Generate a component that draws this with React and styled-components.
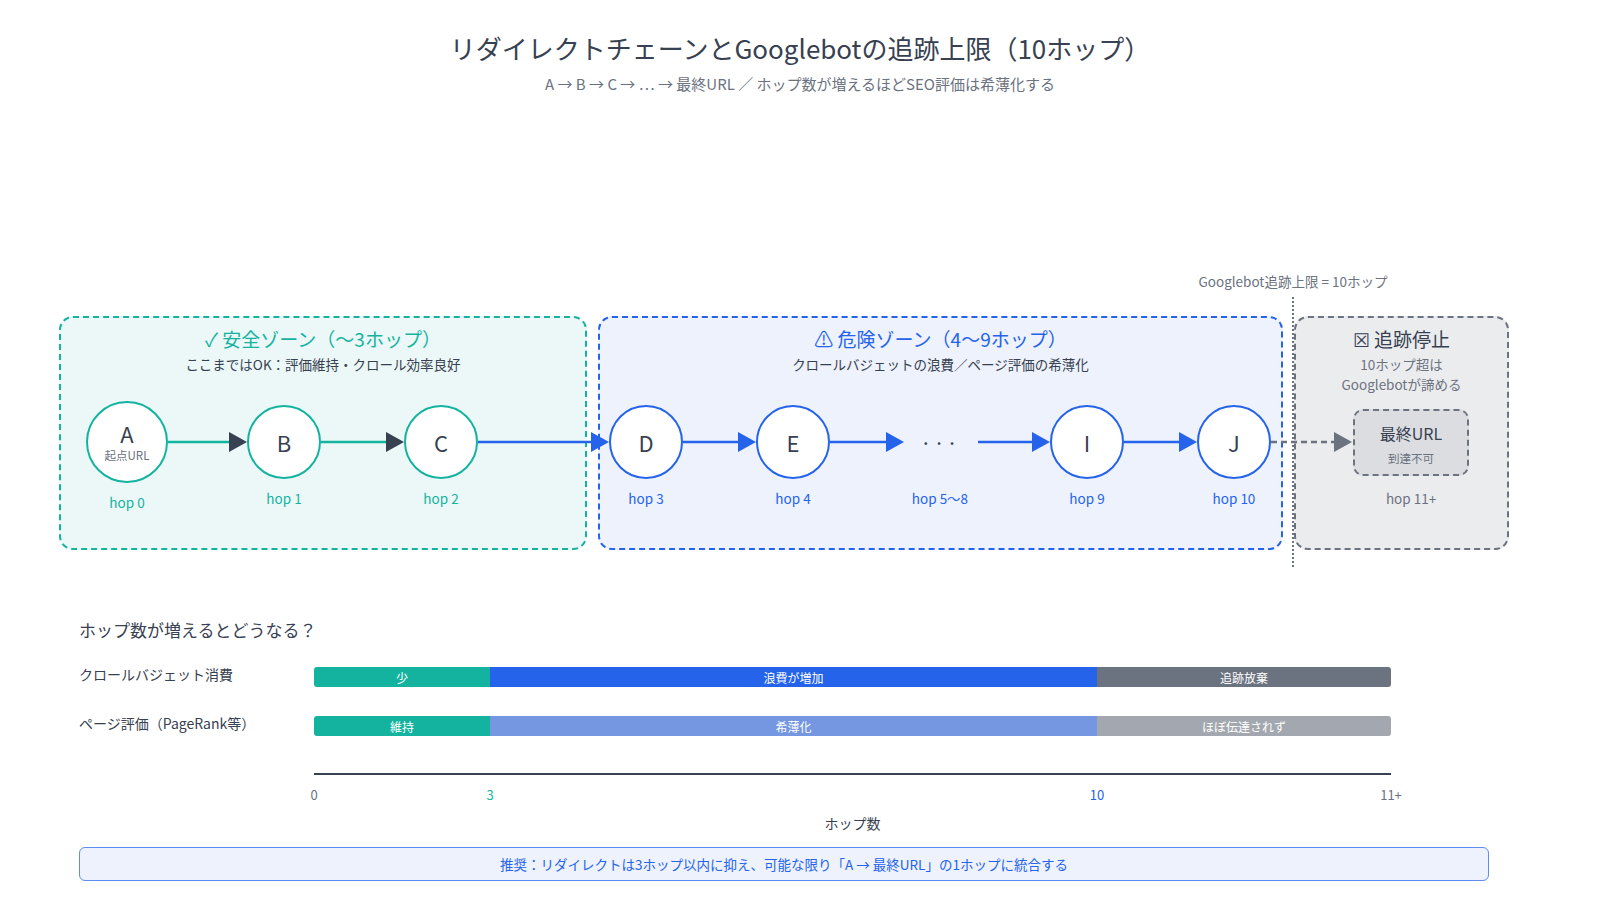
import React from "react";
import styled, { createGlobalStyle } from "styled-components";

const teal = "#14b3a0";
const blue = "#2563eb";
const gray = "#6b7280";
const dark = "#374151";

const Global = createGlobalStyle`
  html, body {
    margin: 0;
    width: 1600px;
    height: 900px;
    overflow: hidden;
  }
  body {
    background: #fff;
    font-family: "Noto Sans CJK JP", "Inter", sans-serif;
    color: ${dark};
  }
`;

const Page = styled.div`
  width: 1600px;
  height: 900px;
  display: flex;
  flex-direction: column;
  overflow: hidden;
`;

const Header = styled.header`
  display: flex;
  flex-direction: column;
  align-items: center;
  padding-top: 30px;
  gap: 8px;
`;

const Title = styled.h1`
  margin: 0;
  font-size: 26px;
  font-weight: 400;
  color: ${dark};
  line-height: 36px;
`;

const Subtitle = styled.div`
  font-size: 15px;
  color: ${gray};
  line-height: 20px;
`;

const Diagram = styled.section`
  position: relative;
  margin-top: 168px;
  height: 310px;
  flex-shrink: 0;
`;

const LimitLabel = styled.div`
  position: absolute;
  left: 1293px;
  top: 9px;
  transform: translateX(-50%);
  font-size: 13.5px;
  color: ${gray};
  white-space: nowrap;
`;

const LimitLine = styled.div`
  position: absolute;
  left: 1292px;
  top: 35px;
  height: 270px;
  border-left: 2px dotted ${gray};
`;

const Zones = styled.div`
  display: flex;
  gap: 11px;
  padding: 54px 0 0 59px;
`;

const Zone = styled.div`
  width: ${(p) => p.$w}px;
  height: 234px;
  flex-shrink: 0;
  box-sizing: border-box;
  border: 2px dashed ${(p) => p.$c};
  background: ${(p) => p.$bg};
  border-radius: 14px;
  display: flex;
  flex-direction: column;
  align-items: center;
  padding-top: 8px;
`;

const ZoneTitle = styled.div`
  font-size: 19px;
  color: ${(p) => p.$c};
  line-height: 26px;
`;

const ZoneSub = styled.div`
  font-size: 13.5px;
  color: ${(p) => p.$c || dark};
  line-height: 20px;
  text-align: center;
  margin-top: 2px;
`;

const Arrows = styled.svg`
  position: absolute;
  left: 0;
  top: 0;
  width: 1600px;
  height: 310px;
  pointer-events: none;
`;

const Node = styled.div`
  position: absolute;
  left: ${(p) => p.$x - p.$r}px;
  top: ${(p) => 180 - p.$r}px;
  width: ${(p) => p.$r * 2}px;
  height: ${(p) => p.$r * 2}px;
  box-sizing: border-box;
  border-radius: 50%;
  border: 2.5px solid ${(p) => p.$c};
  background: #fff;
  display: flex;
  flex-direction: column;
  align-items: center;
  justify-content: center;
  font-size: 22px;
  color: ${dark};
  line-height: 1;
`;

const NodeSub = styled.span`
  font-size: 11.5px;
  line-height: 14px;
  color: ${gray};
  margin-top: 4px;
`;

const Dots = styled.div`
  position: absolute;
  left: 910px;
  top: 166px;
  width: 60px;
  text-align: center;
  font-size: 20px;
  letter-spacing: 2px;
  color: ${dark};
`;

const HopLabel = styled.div`
  position: absolute;
  left: ${(p) => p.$x - 50}px;
  top: ${(p) => p.$y}px;
  width: 100px;
  text-align: center;
  font-size: 13.5px;
  color: ${(p) => p.$c};
`;

const FinalBox = styled.div`
  position: absolute;
  left: 1353px;
  top: 147px;
  width: 116px;
  height: 67px;
  box-sizing: border-box;
  border: 2px dashed ${gray};
  background: #dcdde0;
  border-radius: 10px;
  display: flex;
  flex-direction: column;
  align-items: center;
  justify-content: center;
  gap: 2px;
  font-size: 16px;
  color: ${dark};
`;

const Impact = styled.section`
  margin-top: 46px;
  padding: 0 0 0 79px;
  display: flex;
  flex-direction: column;
`;

const ImpactTitle = styled.div`
  font-size: 17px;
  color: ${dark};
  line-height: 24px;
`;

const Rows = styled.div`
  display: grid;
  grid-template-columns: 235px 1077px;
  row-gap: 29px;
  margin-top: 25px;
  align-items: center;
`;

const RowLabel = styled.div`
  font-size: 14px;
  color: ${dark};
  margin-top: -6px;
`;

const Bar = styled.div`
  display: flex;
  height: 20px;
`;

const Seg = styled.div`
  display: flex;
  align-items: center;
  justify-content: center;
  font-size: 12px;
  color: #fff;
  background: ${(p) => p.$c};
  border-radius: ${(p) => p.$rad};
`;

const Axis = styled.div`
  margin: 37px 0 0 235px;
  width: 1077px;
  border-top: 2px solid ${dark};
  position: relative;
  height: 40px;
`;

const Tick = styled.span`
  position: absolute;
  top: 10px;
  transform: translateX(-50%);
  font-size: 13px;
  color: ${(p) => p.$c || gray};
`;

const AxisTitle = styled.div`
  width: 1077px;
  margin-left: 235px;
  text-align: center;
  font-size: 14px;
  color: ${dark};
  margin-top: -2px;
`;

const Advice = styled.div`
  margin-top: 14px;
  width: 1410px;
  height: 34px;
  box-sizing: border-box;
  border: 1.5px solid #5b8cf0;
  background: #edf2fc;
  border-radius: 6px;
  display: flex;
  align-items: center;
  justify-content: center;
  font-size: 13.5px;
  color: ${blue};
`;

const nodes = [
  { id: "A", x: 127, r: 41, c: teal, sub: "起点URL", hop: "hop 0", hy: 230 },
  { id: "B", x: 284, r: 37, c: teal, hop: "hop 1" },
  { id: "C", x: 441, r: 37, c: teal, hop: "hop 2" },
  { id: "D", x: 646, r: 37, c: blue, hop: "hop 3" },
  { id: "E", x: 793, r: 37, c: blue, hop: "hop 4" },
  { id: "I", x: 1087, r: 37, c: blue, hop: "hop 9" },
  { id: "J", x: 1234, r: 37, c: blue, hop: "hop 10" },
];

const links = [
  { x1: 168, x2: 247, line: teal, head: dark },
  { x1: 321, x2: 404, line: teal, head: dark },
  { x1: 478, x2: 609, line: blue, head: blue },
  { x1: 683, x2: 756, line: blue, head: blue },
  { x1: 830, x2: 904, line: blue, head: blue },
  { x1: 978, x2: 1050, line: blue, head: blue },
  { x1: 1124, x2: 1197, line: blue, head: blue },
  { x1: 1271, x2: 1352, line: gray, head: gray, dash: true },
];

const scale = (v) => (v <= 3 ? (v / 3) * 176 : v <= 10 ? 176 + ((v - 3) / 7) * 607 : 1077);

const rows = [
  {
    label: "クロールバジェット消費",
    segs: [
      ["少", teal, 0, 3],
      ["浪費が増加", blue, 3, 10],
      ["追跡放棄", gray, 10, 11],
    ],
  },
  {
    label: "ページ評価（PageRank等）",
    segs: [
      ["維持", teal, 0, 3],
      ["希薄化", "#7597e2", 3, 10],
      ["ほぼ伝達されず", "#a3a8b0", 10, 11],
    ],
  },
];

const App = () => (
  <Page>
    <Global />
    <Header>
      <Title>リダイレクトチェーンとGooglebotの追跡上限（10ホップ）</Title>
      <Subtitle>A → B → C → … → 最終URL ／ ホップ数が増えるほどSEO評価は希薄化する</Subtitle>
    </Header>

    <Diagram>
      <LimitLabel>Googlebot追跡上限 = 10ホップ</LimitLabel>
      <Zones>
        <Zone $w={528} $c={teal} $bg="#ebf8f7">
          <ZoneTitle $c={teal}>✓ 安全ゾーン（〜3ホップ）</ZoneTitle>
          <ZoneSub>ここまではOK：評価維持・クロール効率良好</ZoneSub>
        </Zone>
        <Zone $w={685} $c={blue} $bg="#edf2fc">
          <ZoneTitle $c={blue}>⚠ 危険ゾーン（4〜9ホップ）</ZoneTitle>
          <ZoneSub>クロールバジェットの浪費／ページ評価の希薄化</ZoneSub>
        </Zone>
        <Zone $w={215} $c={gray} $bg="#ebecee">
          <ZoneTitle $c={dark}>☒ 追跡停止</ZoneTitle>
          <ZoneSub $c={gray}>
            10ホップ超は
            <br />
            Googlebotが諦める
          </ZoneSub>
        </Zone>
      </Zones>
      <LimitLine />
      <Arrows viewBox="0 0 1600 310">
        {links.map((l, i) => (
          <g key={i}>
            <line
              x1={l.x1}
              y1={180}
              x2={l.x2 - 16}
              y2={180}
              stroke={l.line}
              strokeWidth="2.5"
              strokeDasharray={l.dash ? "6 4" : undefined}
            />
            <polygon points={`${l.x2 - 18},170 ${l.x2},180 ${l.x2 - 18},190`} fill={l.head} />
          </g>
        ))}
      </Arrows>
      {nodes.map((n) => (
        <React.Fragment key={n.id}>
          <Node $x={n.x} $r={n.r} $c={n.c}>
            {n.id}
            {n.sub && <NodeSub>{n.sub}</NodeSub>}
          </Node>
          <HopLabel $x={n.x} $y={n.hy || 226} $c={n.c}>
            {n.hop}
          </HopLabel>
        </React.Fragment>
      ))}
      <Dots>···</Dots>
      <HopLabel $x={940} $y={226} $c={blue}>
        hop 5〜8
      </HopLabel>
      <FinalBox>
        最終URL
        <NodeSub>到達不可</NodeSub>
      </FinalBox>
      <HopLabel $x={1411} $y={226} $c={gray}>
        hop 11+
      </HopLabel>
    </Diagram>

    <Impact>
      <ImpactTitle>ホップ数が増えるとどうなる？</ImpactTitle>
      <Rows>
        {rows.map((r) => (
          <React.Fragment key={r.label}>
            <RowLabel>{r.label}</RowLabel>
            <Bar>
              {r.segs.map(([t, c, a, b], i) => (
                <Seg
                  key={t}
                  $c={c}
                  $rad={i === 0 ? "3px 0 0 3px" : i === 2 ? "0 3px 3px 0" : "0"}
                  style={{ width: scale(b) - scale(a) }}
                >
                  {t}
                </Seg>
              ))}
            </Bar>
          </React.Fragment>
        ))}
      </Rows>
      <Axis>
        <Tick style={{ left: 0 }}>0</Tick>
        <Tick style={{ left: 176 }} $c={teal}>3</Tick>
        <Tick style={{ left: 783 }} $c={blue}>10</Tick>
        <Tick style={{ left: 1077 }}>11+</Tick>
      </Axis>
      <AxisTitle>ホップ数</AxisTitle>
      <Advice>推奨：リダイレクトは3ホップ以内に抑え、可能な限り「A → 最終URL」の1ホップに統合する</Advice>
    </Impact>
  </Page>
);

export default App;
